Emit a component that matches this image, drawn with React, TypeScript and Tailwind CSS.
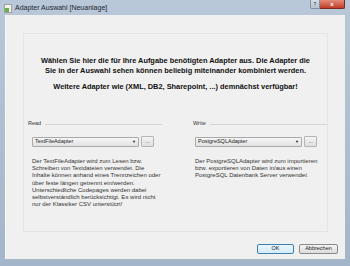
import React from 'react';

const font = { fontFamily: '"Liberation Sans", Arial, sans-serif' };

const Combo: React.FC<{ value: string }> = ({ value }) => (
  <div className="flex items-center gap-[2px]">
    <div className="w-[107px] h-[10px] flex items-center justify-between px-[2px] border border-[#a9a9a9] bg-gradient-to-b from-[#f6f6f6] to-[#e2e2e2] rounded-[1px]">
      <span className="text-[5.5px] leading-none text-[#222]">{value}</span>
      <span className="text-[4px] leading-none text-[#111]">▼</span>
    </div>
    <div className="w-[13px] h-[11px] flex items-center justify-center border border-[#b5b5b5] bg-gradient-to-b from-[#f4f4f4] to-[#dedede] rounded-[1px] text-[5px] leading-none text-[#555]">
      ...
    </div>
  </div>
);

const Column: React.FC<{ label: string; value: string; lines: string[]; indent: string }> = ({ label, value, lines, indent }) => (
  <div className="w-[134px] flex flex-col">
    <div className="flex items-center gap-[4px] h-[6px]">
      <span className="text-[5.5px] leading-none text-[#333]">{label}</span>
      <div className="flex-1 h-px bg-[#d5d5d5]" />
    </div>
    <div className={`mt-[9px] ${indent}`}>
      <Combo value={value} />
      <div className="mt-[11px] text-[6px] leading-[7.2px] text-[#333]">
        {lines.map((l, i) => (
          <div key={i} className="whitespace-nowrap">{l}</div>
        ))}
      </div>
    </div>
  </div>
);

export default function App() {
  return (
    <div className="w-[350px] h-[266px] flex flex-col bg-gradient-to-b from-[#b9c8d8] to-[#a3b5c9] overflow-hidden" style={font}>
      {/* title bar */}
      <div className="h-[15px] flex items-start relative">
        <div className="mt-[4px] ml-[4px] w-[8px] h-[9px] bg-[#f4f4ec] border border-[#a0a0a0] relative">
          <div className="absolute left-0 bottom-0 w-[4px] h-[4px] bg-[#6ab04c]" />
        </div>
        <span className="ml-[3px] mt-[4px] text-[7px] leading-[8px] text-[#1c2530]">Adapter Auswahl [Neuanlage]</span>
        <div className="ml-auto mr-[5px] flex">
          <div className="w-[10px] h-[9px] flex items-center justify-center bg-gradient-to-b from-[#d5dde6] to-[#b6c3d1] border border-[#7d8fa3] border-t-0 rounded-bl-[2px] text-[5px] leading-none text-[#333]">?</div>
          <div className="w-[25px] h-[9px] flex items-center justify-center bg-gradient-to-b from-[#e08a78] to-[#c13b25] border border-[#7a2a20] border-t-0 border-l-0 rounded-br-[2px] text-[6px] font-bold leading-none text-white">x</div>
        </div>
      </div>

      {/* client area */}
      <div className="mx-[5px] h-[244px] bg-[#f0f0f0] border-l border-[#fafafa] flex flex-col">
        <div className="pt-[18px] px-[17px]">
          <div className="h-[199px] border border-[#e4e5e7] flex flex-col">
            <div className="mt-[22px] text-center font-bold text-[7.4px] leading-[10px] text-[#111]">
              <div className="whitespace-nowrap">Wählen Sie hier die für Ihre Aufgabe benötigten Adapter aus. Die Adapter die</div>
              <div className="whitespace-nowrap">Sie in der Auswahl sehen können beliebig miteinander kombiniert werden.</div>
              <div className="mt-[6px] whitespace-nowrap">Weitere Adapter wie (XML, DB2, Sharepoint, ...) demnächst verfügbar!</div>
            </div>
            <div className="mt-[29px] pl-[4px] flex gap-[31px]">
              <Column
                label="Read"
                value="TextFileAdapter"
                indent="pl-[4px]"
                lines={[
                  'Der TextFileAdapter wird zum Lesen bzw.',
                  'Schreiben von Textdateien verwendet. Die',
                  'Inhalte können anhand eines Trennzeichen oder',
                  'über feste längen getrennt ein/werden.',
                  'Unterschiedliche Codepages werden dabei',
                  'selbstverständlich berücksichtigt. Es wird nicht',
                  'nur der Klassiker CSV unterstützt!',
                ]}
              />
              <Column
                label="Write"
                value="PostgreSQLAdapter"
                indent="pl-[2px]"
                lines={[
                  'Der PostgreSQLAdapter wird zum importieren',
                  'bzw. exportieren von Daten in/aus einen',
                  'PostgreSQL Datenbank Server verwendet',
                ]}
              />
            </div>
          </div>
        </div>

        <div className="mt-[12px] pr-[7px] flex justify-end gap-[5px]">
          <div className="w-[37px] h-[10px] flex items-center justify-center border border-[#3c7fb1] bg-gradient-to-b from-[#eaf6fd] to-[#d4ecf9] rounded-[2px] text-[5.5px] leading-none text-[#222]">OK</div>
          <div className="w-[39px] h-[10px] flex items-center justify-center border border-[#8a8a8a] bg-gradient-to-b from-[#f4f4f4] to-[#dcdcdc] rounded-[2px] text-[5.5px] leading-none text-[#222]">Abbrechen</div>
        </div>
      </div>
    </div>
  );
}
